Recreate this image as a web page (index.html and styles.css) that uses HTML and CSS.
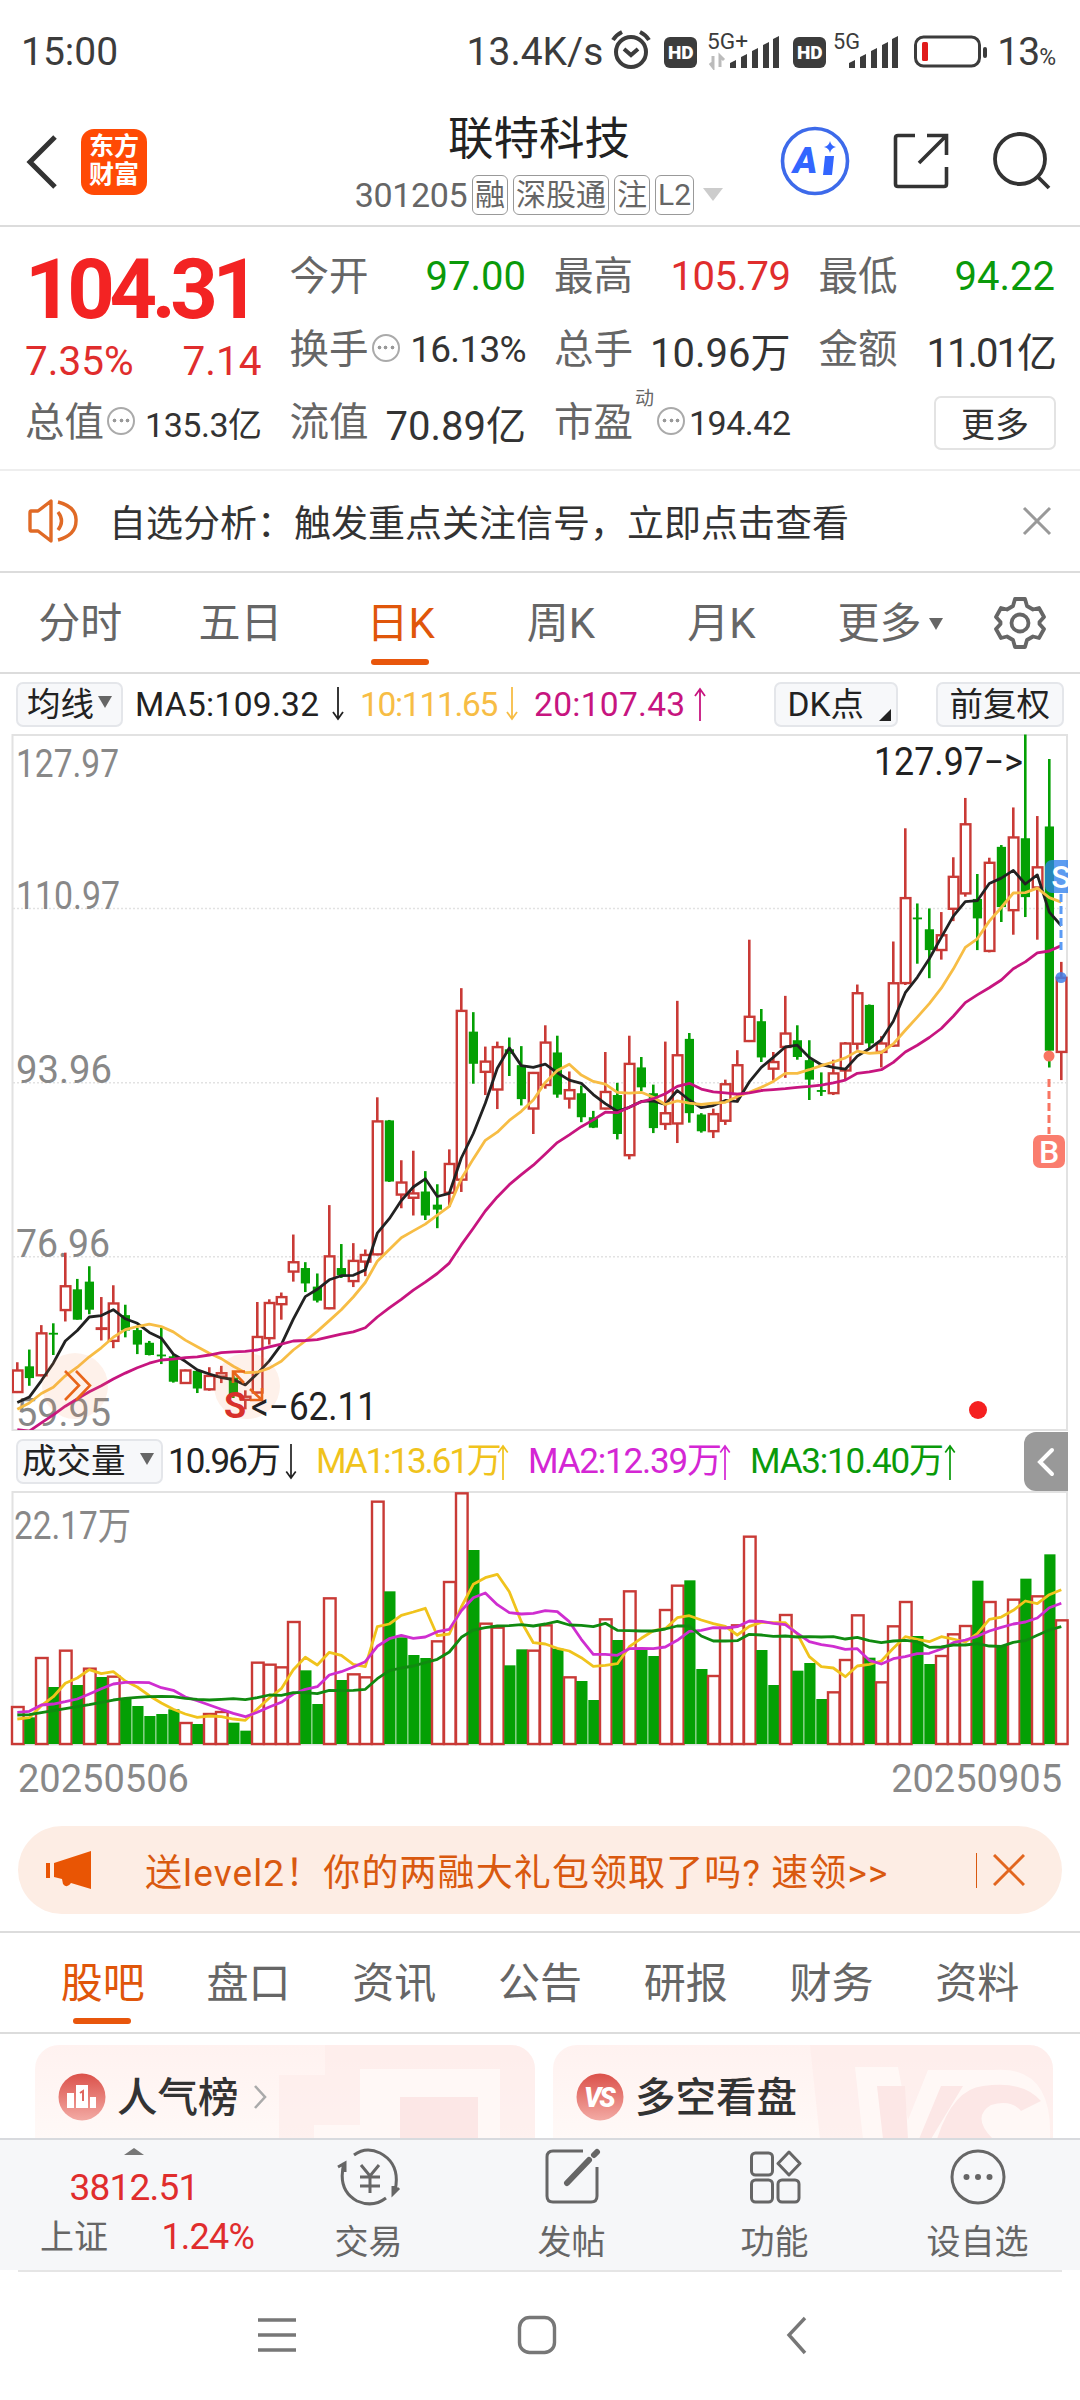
FILE: index.html
```html
<!DOCTYPE html>
<html lang="zh-CN">
    <head>
        <meta charset="UTF-8">
        <meta name="viewport" content="width=device-width, initial-scale=1.0">
        <title>联特科技 301205</title>
        <link rel="stylesheet" href="styles.css">
    </head>
    <body>
        <div class="status-bar">
            <span class="time">15:00</span>
            <span class="speed">13.4K/s</span>
            <svg class="alarm" width="42" height="42" viewBox="0 0 42 42" fill="none" stroke="#3c3c3c" stroke-width="4">
                <circle cx="21" cy="23" r="15"/>
                <path d="M3 11 Q6 6 12 3 M39 11 Q36 6 30 3 M14 20 L21 26 L28 20"/>
            </svg>
            <span class="hd">HD</span>
            <svg class="signal" width="74" height="40" viewBox="0 0 74 40">
                <text x="0" y="19" font-size="22" textLength="41" lengthAdjust="spacingAndGlyphs">5G+</text>
                <path d="M6 26 V37 L3 33 M13 37 V26 L17 30" fill="none" stroke="#bbb" stroke-width="3"/>
                <path d="M23 38 V33 L29 30 V38 Z M34 38 V27 L40 24 V38 Z M45 38 V21 L51 18 V38 Z M56 38 V15 L62 12 V38 Z M66 38 V9 L72 6 V38 Z"/>
            </svg>
            <span class="hd hd2">HD</span>
            <svg class="signal signal2" width="67" height="40" viewBox="0 0 67 40">
                <text x="0" y="19" font-size="22" textLength="27" lengthAdjust="spacingAndGlyphs">5G</text>
                <path d="M16 38 V33 L22 30 V38 Z M27 38 V27 L33 24 V38 Z M38 38 V21 L44 18 V38 Z M49 38 V15 L55 12 V38 Z M59 38 V9 L65 6 V38 Z"/>
            </svg>
            <svg class="battery" width="74" height="34" viewBox="0 0 74 34">
                <rect x="1.5" y="2" width="64" height="29" rx="8" fill="none" stroke="#3c3c3c" stroke-width="3"/>
                <rect x="8" y="7" width="6" height="19" rx="1.5" fill="#e01b1b"/>
                <rect x="69" y="12" width="4" height="11" rx="2" fill="#3c3c3c"/>
            </svg>
            <span class="percent">13<small>%</small></span>
        </div>

        <header class="header">
            <div class="header-left">
                <svg width="32" height="54" viewBox="0 0 32 54" fill="none" stroke="#333" stroke-width="5"><path d="M29 2 L4 27 L29 52"/></svg>
                <div class="logo">东方<br>财富</div>
            </div>
            <div class="header-title">
                <h1>联特科技</h1>
                <div class="code">
                    <span class="code-num">301205</span>
                    <span class="tag">融</span>
                    <span class="tag">深股通</span>
                    <span class="tag">注</span>
                    <span class="tag">L2</span>
                    <i class="down-light"></i>
                </div>
            </div>
            <div class="header-right">
                <svg width="70" height="70" viewBox="0 0 70 70">
                    <circle cx="35" cy="35" r="32.5" fill="none" stroke="#3d6aea" stroke-width="3.6"/>
                    <text class="ai" x="13" y="47">A</text>
                    <path d="M45 30 L54 30 L52 49 L43 49 Z M50 15 Q51 20 56 21 Q51 22 50 27 Q49 22 44 21 Q49 20 50 15" fill="#3366ff"/>
                </svg>
                <svg width="58" height="58" viewBox="0 0 58 58" fill="none" stroke="#333" stroke-width="3.6">
                    <path d="M23 3.500 H6 Q3.500 3.500 3.500 6 V52 Q3.500 54.500 6 54.500 H52 Q54.500 54.500 54.500 52 V35 M35 3.500 H54.500 V23 M54 4 L27 31"/>
                </svg>
                <svg width="60" height="58" viewBox="0 0 60 58" fill="none" stroke="#333" stroke-width="3.8"><circle cx="28" cy="27" r="25"/><path d="M46 45 L57 56"/></svg>
            </div>
        </header>

        <section class="quote">
            <div class="quote-col">
                <div class="price red">104.31</div>
                <div class="change red"><span>7.35%</span><span>7.14</span></div>
                <div class="cell"><label>总值</label><i class="dots"></i><b class="small">135.3亿</b></div>
            </div>
            <div class="quote-col">
                <div class="cell"><label>今开</label><b class="green">97.00</b></div>
                <div class="cell"><label>换手</label><i class="dots"></i><b class="mid">16.13%</b></div>
                <div class="cell"><label>流值</label><b>70.89亿</b></div>
            </div>
            <div class="quote-col">
                <div class="cell"><label>最高</label><b class="red tight">105.79</b></div>
                <div class="cell"><label>总手</label><b>10.96万</b></div>
                <div class="cell"><label>市盈</label><sup>动</sup><i class="dots"></i><b class="small">194.42</b></div>
            </div>
            <div class="quote-col">
                <div class="cell"><label>最低</label><b class="green">94.22</b></div>
                <div class="cell"><label>金额</label><b class="tighter">11.01亿</b></div>
                <div class="cell"><button class="more">更多</button></div>
            </div>
        </section>

        <section class="notice">
            <svg width="52" height="44" viewBox="0 0 52 44" fill="none" stroke="#e06a26" stroke-width="3.4" stroke-linejoin="round">
                <path d="M3 12 H10 L23 2 V42 L10 32 H3 Q2 32 2 30 V14 Q2 12 3 12 M30 13 Q37 22 30 31 M30 3 Q49 8 48 22 Q48 36 30 41"/>
            </svg>
            <p>自选分析：触发重点关注信号，立即点击查看</p>
            <svg class="close" width="30" height="30" viewBox="0 0 30 30" stroke="#999" stroke-width="3"><path d="M2 2 L28 28 M28 2 L2 28"/></svg>
        </section>

        <nav class="period-tabs">
            <span>分时</span>
            <span>五日</span>
            <span class="active">日K</span>
            <span>周K</span>
            <span>月K</span>
            <span class="period-more">更多<i class="down"></i></span>
            <svg width="52" height="54" viewBox="0 0 52 54" fill="none" stroke="#666" stroke-width="3.8" stroke-linejoin="round">
                <path d="M21 3 H31 L33 10 L39 13.500 L45 12 L50 21 L45.500 26 V28 L50 33 L45 42 L39 40.500 L33 44 L31 51 H21 L19 44 L13 40.500 L7 42 L2 33 L6.500 28 V26 L2 21 L7 12 L13 13.500 L19 10 Z"/>
                <circle cx="26" cy="27" r="8.500"/>
            </svg>
        </nav>

        <section class="indicator ma-row">
            <span class="chip">均线<i class="down"></i></span>
            <span class="ma ma5">MA5:109.32</span><svg class="arrow ma5" viewBox="0 0 12 34"><path d="M6 0 V32 M1 25 L6 32 L11 25"/></svg>
            <span class="ma ma10">10:111.65</span><svg class="arrow ma10" viewBox="0 0 12 34"><path d="M6 0 V32 M1 25 L6 32 L11 25"/></svg>
            <span class="ma ma20">20:107.43</span><svg class="arrow ma20" viewBox="0 0 12 34"><path d="M6 34 V2 M1 9 L6 2 L11 9"/></svg>
            <span class="chip chip-dk">DK点<i class="corner"></i></span>
            <span class="chip chip-fq">前复权</span>
        </section>

        <svg id="kline" class="chart" width="1080" height="702" viewBox="0 730 1080 702"></svg>

        <section class="indicator vol-row">
            <span class="chip">成交量<i class="down"></i></span>
            <span class="ma v0">10.96万</span><svg class="arrow v0" viewBox="0 0 12 38"><path d="M6 0 V36 M1 29 L6 36 L11 29"/></svg>
            <span class="ma v1">MA1:13.61万</span><svg class="arrow v1" viewBox="0 0 12 38"><path d="M6 38 V2 M1 9 L6 2 L11 9"/></svg>
            <span class="ma v2">MA2:12.39万</span><svg class="arrow v2" viewBox="0 0 12 38"><path d="M6 38 V2 M1 9 L6 2 L11 9"/></svg>
            <span class="ma v3">MA3:10.40万</span><svg class="arrow v3" viewBox="0 0 12 38"><path d="M6 38 V2 M1 9 L6 2 L11 9"/></svg>
            <span class="collapse"><svg width="18" height="30" viewBox="0 0 18 30" fill="none" stroke="#fff" stroke-width="4" stroke-linecap="round"><path d="M15 3 L3 15 L15 27"/></svg></span>
        </section>

        <svg id="volume" class="chart" width="1080" height="257" viewBox="0 1491 1080 257"></svg>

        <div class="dates"><span>20250506</span><span>20250905</span></div>

        <div class="banner">
            <svg width="46" height="40" viewBox="0 0 46 40" fill="#e95504"><path d="M0 13 H4 V28 H0 Z M8 13 L45 1 V39 L25 33 Q21 39 17 34 L16 29 L8 27 Z"/></svg>
            <p>送level2！你的两融大礼包领取了吗? 速领&gt;&gt;</p>
            <i class="bar"></i>
            <svg width="32" height="32" viewBox="0 0 32 32" stroke="#e2661f" stroke-width="3"><path d="M1 1 L31 31 M31 1 L1 31"/></svg>
        </div>

        <nav class="info-tabs">
            <span class="active">股吧</span>
            <span>盘口</span>
            <span>资讯</span>
            <span>公告</span>
            <span>研报</span>
            <span>财务</span>
            <span>资料</span>
        </nav>

        <section class="cards">
            <div class="card">
                <svg class="card-bg" width="500" height="94" viewBox="0 0 500 94">
                    <path d="M290 0 H500 V94 H244 V30 H290 Z" fill="#fdebe9" opacity=".6"/>
                    <path d="M279 80 H325 V24 H465 V94 H279 Z" fill="#fff8f6"/>
                    <path d="M365 52 H443 V94 H365 Z" fill="#fce7e6"/>
                </svg>
                <svg width="48" height="48" viewBox="0 0 48 48">
                    <circle cx="24" cy="24" r="23.500" fill="url(#ball)"/>
                    <path d="M9 20 H16 V35 H9 Z M18 12 H30 V35 H18 Z M32 24 H38 V35 H32 Z" fill="#fff"/>
                    <path d="M22 20 L25 18 V28" stroke="#e0675f" stroke-width="2" fill="none"/>
                    <defs><linearGradient id="ball" x1="0" y1="0" x2="0" y2="1"><stop offset="0" stop-color="#db514a"/><stop offset="1" stop-color="#f3aaa4"/></linearGradient></defs>
                </svg>
                <h2>人气榜</h2>
                <svg width="14" height="24" viewBox="0 0 14 24" fill="none" stroke="#aaa" stroke-width="2.6"><path d="M2 1 L12 12 L2 23"/></svg>
            </div>
            <div class="card">
                <svg class="card-bg" width="500" height="94" viewBox="0 0 500 94">
                    <path d="M257 0 H500 V94 H267 Z" fill="#fdebe9" opacity=".6"/>
                    <path d="M302 22 H345 L355 75 L375 25 H440 Q500 20 497 94 H310 Z" fill="#fff8f6"/>
                    <path d="M324 41 H352 L355 94 H330 Z M388 41 H410 L378 94 H366 Z" fill="#fce7e6"/>
                    <path d="M488 56 Q470 35 430 41 Q400 44 384 94 H440 Q418 72 438 60 Q458 54 468 66 Z" fill="#fce7e6"/>
                </svg>
                <svg width="48" height="48" viewBox="0 0 48 48">
                    <circle cx="24" cy="24" r="23.500" fill="url(#ball)"/>
                    <text class="vs" x="8" y="34">VS</text>
                </svg>
                <h2>多空看盘</h2>
            </div>
        </section>

        <footer class="toolbar">
            <div class="index">
                <i class="up"></i>
                <div class="index-num">3812.51</div>
                <div class="index-row"><span>上证</span><b>1.24%</b></div>
            </div>
            <div class="tool">
                <svg width="64" height="58" viewBox="0 0 64 58" fill="none" stroke="#666" stroke-width="3">
                    <path d="M17 7 Q29 -2 43 5 Q64 16 58 43 M62 40 L56 46 V38 M49 50 Q36 60 20 53 Q0 42 7 15 M1 19 L8 15 V24"/>
                    <path d="M24 17 L33 28 L42 17 M33 28 V45 M23 29 H43 M23 38 H43"/>
                </svg>
                <span>交易</span>
            </div>
            <div class="tool">
                <svg width="58" height="58" viewBox="0 0 58 58" fill="none" stroke="#666" stroke-width="3">
                    <path d="M40 3 H10 Q4 3 4 9 V48 Q4 54 10 54 H48 Q54 54 54 48 V19"/>
                    <path d="M24 35 L46 12 M51 7 L54 4" stroke-width="6" stroke-linecap="round"/>
                </svg>
                <span>发帖</span>
            </div>
            <div class="tool">
                <svg width="54" height="58" viewBox="0 0 54 58" fill="none" stroke="#666" stroke-width="3">
                    <rect x="3.500" y="5" width="21" height="22" rx="4"/>
                    <rect x="3.500" y="32" width="21" height="22" rx="4"/>
                    <rect x="30" y="32" width="21" height="22" rx="4"/>
                    <path d="M41 4 L52 15.500 L41 27 L30 15.500 Z" stroke-linejoin="round"/>
                </svg>
                <span>功能</span>
            </div>
            <div class="tool">
                <svg width="58" height="58" viewBox="0 0 58 58">
                    <circle cx="29" cy="29" r="26" fill="none" stroke="#666" stroke-width="3"/>
                    <g fill="#666"><circle cx="17.500" cy="29" r="3"/><circle cx="29" cy="29" r="3"/><circle cx="40.500" cy="29" r="3"/></g>
                </svg>
                <span>设自选</span>
            </div>
        </footer>

        <div class="system-nav">
            <svg width="40" height="40" viewBox="0 0 40 40" stroke="#777" stroke-width="3.400"><path d="M1 5 H39 M1 20 H39 M1 35 H39"/></svg>
            <svg width="40" height="40" viewBox="0 0 40 40" fill="none" stroke="#777" stroke-width="3.400"><rect x="2.500" y="2.500" width="35" height="35" rx="10"/></svg>
            <svg width="40" height="40" viewBox="0 0 40 40" fill="none" stroke="#777" stroke-width="3.400"><path d="M28 3 L12 20 L28 38"/></svg>
        </div>

        <script src="script.js"></script>
    </body>
</html>
```
FILE: styles.css
```css
* {
    box-sizing: border-box;
}

body {
    margin: 0;
    width: 1080px;
    height: 2400px;
    overflow: hidden;
    background-color: #fff;
    color: #333;
    font-family: Roboto, "Noto Sans CJK SC", sans-serif;
}

svg {
    display: block;
    flex: none;
}

h1, h2, p {
    margin: 0;
    font-weight: 400;
}

i {
    display: inline-block;
    font-style: normal;
}

.red {
    color: #e02d2d;
}

.green {
    color: #0a9a0a;
}

/* Status bar */
.status-bar {
    display: flex;
    align-items: center;
    height: 104px;
    padding: 0 25px 0 21px;
    font-size: 39px;
    color: #3c3c3c;
    fill: #3c3c3c;
}

.time {
    margin-right: auto;
}

.speed {
    margin-right: 7px;
}

.alarm {
    margin: 0 12px 4px 0;
}

.hd {
    width: 33px;
    height: 31px;
    border-radius: 6px;
    background-color: #3c3c3c;
    color: #fff;
    font-size: 19px;
    font-weight: 900;
    line-height: 31px;
    text-align: center;
}

.signal {
    margin: 0 12px 4px 10px;
}

.signal2 {
    margin: 0 14px 4px 7px;
}

.battery {
    margin-right: 9px;
}

.percent {
    letter-spacing: -1px;
}

.percent small {
    font-size: 23px;
}

/* Header */
.header {
    display: grid;
    grid-template-columns: 1fr auto 1fr;
    align-items: center;
    height: 123px;
    padding: 0 28px 0 26px;
    border-bottom: 2px solid #dcdcdc;
}

.header-left {
    display: flex;
    align-items: center;
    gap: 23px;
    padding-bottom: 6px;
}

.logo {
    width: 66px;
    height: 66px;
    border-radius: 13px;
    background-color: #ff4a05;
    color: #fff;
    font-size: 25px;
    font-weight: 700;
    line-height: 28px;
    padding-top: 4px;
    text-align: center;
}

.header-title {
    text-align: center;
    color: #222;
}

.header-title h1 {
    font-size: 45.5px;
    line-height: 60px;
}

.code {
    display: flex;
    align-items: center;
    gap: 5px;
    height: 50px;
}

.code-num {
    font-size: 34px;
    letter-spacing: -0.4px;
    color: #666;
}

.tag {
    height: 40px;
    padding: 0 2px;
    border: 1.5px solid #999;
    border-radius: 6px;
    font-size: 30px;
    line-height: 37px;
    color: #666;
}

.down-light {
    margin-left: 4px;
    border: 10px solid transparent;
    border-top: 13px solid #ccc;
    border-bottom: 0;
}

.header-right {
    display: flex;
    align-items: center;
    justify-content: flex-end;
    gap: 42px;
    padding-bottom: 8px;
}

.ai {
    font-size: 37px;
    font-weight: 900;
    font-style: italic;
    fill: #3366ff;
}

/* Quote */
.quote {
    display: grid;
    grid-template-columns: repeat(4, 1fr);
    column-gap: 28px;
    height: 244px;
    padding: 13px 25px 0 25px;
    border-bottom: 2px solid #eee;
}

.cell {
    display: flex;
    align-items: center;
    height: 73px;
}

.cell label {
    font-size: 39.5px;
    line-height: 60px;
    color: #666;
}

.cell b {
    margin-left: auto;
    font-size: 40px;
    font-weight: 400;
}

.cell b.mid {
    font-size: 37px;
    letter-spacing: -0.7px;
}

.cell b.small {
    font-size: 34px;
    letter-spacing: -0.5px;
}

.cell b.tight {
    letter-spacing: -0.5px;
}

.cell b.tighter {
    letter-spacing: -2px;
}

.cell sup {
    width: 21px;
    align-self: flex-start;
    font-size: 19px;
    line-height: 26px;
    padding-left: 2px;
    color: #666;
}

.dots {
    width: 28px;
    height: 28px;
    margin: -4px 0 0 3px;
    border: 2px solid #aaa;
    border-radius: 50%;
    background: radial-gradient(circle, #999 1.6px, transparent 2.2px) center / 7px 7px no-repeat,
        radial-gradient(circle, #999 1.6px, transparent 2.2px) 2px center / 7px 7px no-repeat,
        radial-gradient(circle, #999 1.6px, transparent 2.2px) 15px center / 7px 7px no-repeat;
}

.price {
    height: 92px;
    font-size: 83px;
    font-weight: 700;
    line-height: 100px;
    letter-spacing: -5.4px;
    color: #f32323;
}

.change {
    display: flex;
    justify-content: space-between;
    height: 54px;
    font-size: 40.5px;
    line-height: 59px;
}

.more {
    width: 122px;
    height: 54px;
    margin: 0 -1px 0 auto;
    border: 2px solid #e3e3e3;
    border-radius: 7px;
    background-color: #fff;
    color: #333;
    font: 34px/46px "Noto Sans CJK SC", sans-serif;
    padding: 0;
}

/* Notice */
.notice {
    display: flex;
    align-items: center;
    height: 102px;
    padding: 0 28px 0 28px;
    border-bottom: 2px solid #dcdcdc;
    font-size: 37px;
}

.notice p {
    margin: 0 auto 0 29px;
}

/* Period tabs */
.period-tabs {
    display: flex;
    align-items: center;
    height: 101px;
    padding-right: 34px;
    border-bottom: 2px solid #dcdcdc;
    font-size: 42px;
    color: #666;
}

.period-tabs span {
    position: relative;
    width: 160.3px;
    height: 99px;
    text-align: center;
    line-height: 102px;
}

.period-tabs .active, .info-tabs .active {
    color: #e0560a;
}

.active::after {
    content: "";
    position: absolute;
    left: 50%;
    bottom: 7px;
    width: 58px;
    height: 6px;
    margin-left: -30px;
    border-radius: 3px;
    background-color: #e8560c;
}

.period-tabs .period-more {
    width: auto;
    margin: 0 auto 0 36px;
}

.down {
    margin-left: 7px;
    border: 7px solid transparent;
    border-top: 12px solid #666;
    border-bottom: 0;
    vertical-align: 8px;
}

/* Indicator rows */
.indicator {
    display: flex;
    align-items: center;
    height: 56px;
    padding: 4px 16px 0;
    font-size: 33.5px;
    white-space: nowrap;
}

.indicator > * {
    flex: none;
}

.chip {
    height: 45px;
    border: 2px solid #e4e6ea;
    border-radius: 7px;
    background-color: #f7f8fa;
    padding: 0 9px;
    line-height: 41px;
    font-size: 33.5px;
    color: #222;
}

.ma-row .chip:first-child {
    width: 107px;
    margin-right: 12px;
}

.ma-row .down {
    margin-left: 4px;
}

.arrow {
    width: 12px;
    height: 36px;
    fill: none;
    stroke: currentColor;
    stroke-width: 1.8;
}

.ma5, .v0 { color: #222; }
.ma10 { color: #f7bd45; }
.ma20 { color: #c7157f; }
.v1 { color: #f0c31c; }
.v2 { color: #d426d4; }
.v3 { color: #0a9a0a; }

span.ma5 { width: 197px; letter-spacing: 0.3px; }
span.ma10 { width: 146px; margin-left: 16px; letter-spacing: -1.3px; }
span.ma20 { width: 160px; margin-left: 16px; letter-spacing: 0.3px; }

.chip-dk {
    position: relative;
    margin-left: auto;
    width: 124px;
    padding-left: 12px;
}

.corner {
    position: absolute;
    right: 5px;
    bottom: 4px;
    border-left: 12px solid transparent;
    border-bottom: 12px solid #222;
}

.chip-fq {
    margin-left: 38px;
    padding: 0 12px;
}

.vol-row {
    height: 59px;
    padding-right: 12px;
    padding-top: 0;
}

.vol-row .chip {
    width: 147px;
    padding: 0 4px;
    font-size: 34.5px;
    margin-right: 5px;
}

.vol-row .down {
    margin-left: 14px;
}

.vol-row .ma { font-size: 35px; line-height: 50px; }
span.v0 { width: 117px; letter-spacing: -2px; }
span.v1 { width: 181px; margin-left: 19px; letter-spacing: -2.1px; }
span.v2 { width: 191px; margin-left: 19px; letter-spacing: -1.2px; }
span.v3 { width: 194px; margin-left: 19px; letter-spacing: -1.2px; }

.collapse {
    display: flex;
    align-items: center;
    justify-content: center;
    width: 44px;
    height: 59px;
    margin-left: auto;
    border-radius: 12px 0 0 12px;
    background-color: #999;
}

.dates {
    display: flex;
    justify-content: space-between;
    height: 78px;
    padding: 0 18px;
    font-size: 38px;
    line-height: 63px;
    color: #888;
}

/* Banner */
.banner {
    display: flex;
    align-items: center;
    height: 88px;
    margin: 0 18px 17px;
    padding: 0 37px 0 28px;
    border-radius: 44px;
    background-color: #fdede4;
    color: #d9590f;
    font-size: 37px;
    letter-spacing: 1.1px;
}

.banner p {
    margin: 0 auto 0 53px;
}

.bar {
    width: 1px;
    height: 35px;
    margin-right: 16px;
    background-color: #d9590f;
}

/* Info tabs */
.info-tabs {
    display: flex;
    height: 103px;
    padding: 0 30px;
    border-top: 2px solid #dcdcdc;
    border-bottom: 2px solid #dcdcdc;
    font-size: 42px;
    line-height: 102px;
    color: #666;
}

.info-tabs span {
    position: relative;
    flex: 1;
    text-align: center;
}

.info-tabs .active::after {
    bottom: 8px;
}

/* Cards */
.cards {
    display: flex;
    gap: 18px;
    height: 104px;
    padding: 11px 27px 0 35px;
}

.card {
    position: relative;
    display: flex;
    align-items: center;
    width: 500px;
    padding: 11px 0 0 23px;
    border-radius: 24px 24px 0 0;
    background: linear-gradient(#fff2f0, #fff9f7);
    overflow: hidden;
}

.card > * {
    position: relative;
}

.card .card-bg {
    position: absolute;
    left: 0;
    top: 0;
}

.card h2 {
    margin: 0 14px 0 11px;
    padding-top: 2px;
    font-size: 40.5px;
    font-weight: 500;
    line-height: 60px;
}

.vs {
    font-size: 27px;
    font-weight: 900;
    font-style: italic;
    letter-spacing: -2px;
    fill: #fff;
}

/* Toolbar */
.toolbar {
    display: flex;
    height: 132px;
    border-top: 2px solid #d8dade;
    background-color: #f6f7f9;
    font-size: 34px;
    color: #666;
}

.index {
    width: 267px;
    padding: 8px 13px 0 40px;
    text-align: center;
}

.up {
    display: block;
    width: 0;
    margin-left: 84px;
    border: 10px solid transparent;
    border-bottom: 7px solid #777;
    border-top: 0;
}

.index-num {
    padding-right: 26px;
    font-size: 37px;
    line-height: 66px;
    letter-spacing: -0.8px;
    color: #e02d2d;
}

.index-row {
    display: flex;
    justify-content: space-between;
    line-height: 32px;
}

.index-row b {
    font-size: 36px;
    font-weight: 400;
    letter-spacing: -0.8px;
    color: #e02d2d;
}

.tool {
    display: flex;
    flex-direction: column;
    align-items: center;
    width: 203px;
    padding-top: 8px;
}

.tool span {
    line-height: 50px;
    padding-top: 11px;
}

/* System navigation */
.system-nav {
    display: flex;
    justify-content: space-between;
    height: 130px;
    margin: 0 18px;
    padding: 43px 245px 0 239px;
    border-top: 2px solid #e5e5e5;
}

/* Charts */
.frame {
    fill: none;
    stroke: #e2e2e2;
    stroke-width: 2;
}

.grid {
    stroke: #e2e2e2;
    stroke-width: 1.5;
    stroke-dasharray: 2 2;
}

.axis {
    font-size: 38px;
    fill: #888;
}

.mark {
    font-size: 38px;
    fill: #222;
}

.up-body {
    fill: #fff;
    stroke: #c93a36;
    stroke-width: 2.4;
}

.up-wick {
    stroke: #c93a36;
    stroke-width: 2.6;
}

.down-body {
    fill: #04a004;
}

.down-wick {
    stroke: #04a004;
    stroke-width: 2.6;
}

.line {
    fill: none;
    stroke-width: 2.8;
    stroke-linejoin: round;
}

.badge {
    font-size: 32px;
    font-weight: 500;
    fill: #fff;
    text-anchor: middle;
}
```
FILE: script.js
```js
const step = 12;
const firstX = 17.3;

// [direction, high, body top, body bottom, low], measured down from the top of the plot
const candles = [
    ['r',1396,1412,1464,1464],['g',1368,1405,1431,1448],['r',1314,1330,1427,1427],['g',1310,1331,1335,1380],
    ['r',1154,1226,1283,1306],['g',1212,1235,1302,1302],['g',1184,1218,1280,1290],['r',1252,1319,1324,1348],
    ['r',1226,1264,1351,1365],['g',1269,1292,1326,1341],['g',1320,1325,1357,1378],['g',1349,1353,1380,1381],
    ['g',1320,1379,1383,1400],['g',1378,1383,1439,1441],['r',1412,1412,1444,1444],['g',1413,1415,1454,1464],
    ['r',1407,1424,1458,1459],['r',1404,1418,1430,1442],['g',1425,1430,1467,1475],['r',1458,1470,1481,1500],
    ['r',1263,1338,1465,1465],['r',1257,1263,1345,1357],['r',1242,1250,1270,1302],['r',1114,1173,1198,1218],
    ['g',1175,1188,1222,1241],['g',1200,1229,1260,1264],['r',1049,1160,1279,1279],['g',1135,1188,1204,1210],
    ['r',1133,1170,1219,1230],['r',1147,1157,1176,1206],['r',811,862,1160,1160],['g',861,862,997,998],
    ['r',950,997,1028,1056],['r',929,1021,1035,1072],['g',974,1019,1072,1082],['g',1003,1048,1059,1100],
    ['r',926,956,1024,1053],['r',570,618,995,1020],['g',623,666,737,781],['r',699,730,757,806],
    ['r',688,698,796,837],['g',679,705,715,764],['g',698,740,815,829],['r',755,755,838,892],
    ['r',652,688,786,792],['g',675,712,805,812],['r',754,793,816,836],['g',785,802,855,866],
    ['g',841,855,878,879],['r',711,797,838,838],['g',779,806,892,904],['r',675,735,941,948],
    ['g',722,745,789,797],['g',783,802,879,890],['r',688,844,872,883],['r',598,716,871,912],
    ['g',669,682,846,867],['g',846,849,886,889],['r',836,846,888,901],['r',772,780,865,872],
    ['r',707,738,806,822],['r',463,631,689,689],['g',616,643,723,733],['r',711,731,750,774],
    ['r',587,668,702,768],['g',652,685,722,728],['g',685,729,772,817],['g',756,795,799,808],
    ['r',728,756,804,806],['r',689,690,754,772],['r',562,579,695,706],['g',606,607,692,704],
    ['r',676,690,713,745],['r',467,557,699,700],['r',217,369,561,563],['g',383,414,418,516],
    ['g',394,440,486,548],['r',402,451,488,507],['r',281,322,397,422],['r',150,206,363,368],
    ['g',318,373,416,486],['r',282,291,490,491],['g',254,258,391,424],['r',171,235,400,452],
    ['g',10,239,369,413],['r',190,301,350,463],['g',64,213,708,745],['r',512,545,713,773]
];

const ma5 = [1485,1473,1437,1398,1349,1326,1296,1293,1280,1300,1310,1330,1343,1378,1394,1413,1422,1430,1434,1446,1421,1393,1357,1301,1251,1235,1214,1205,1204,1192,1111,1079,1039,1009,991,1030,1023,945,891,824,747,702,741,745,738,757,773,780,805,825,842,833,820,819,827,796,817,834,829,818,820,777,745,723,700,696,723,739,745,749,720,704,684,643,580,546,505,458,411,379,377,339,327,310,340,320,402,432];
const ma10 = [1500,1486,1465,1451,1426,1407,1384,1364,1341,1324,1317,1312,1317,1329,1347,1362,1376,1388,1405,1419,1418,1409,1394,1369,1349,1328,1304,1280,1252,1220,1173,1147,1121,1106,1091,1071,1052,991,947,906,888,862,842,817,778,752,738,762,776,782,800,802,800,811,827,819,824,827,824,822,809,800,789,776,758,758,750,741,733,724,709,714,712,693,663,634,604,570,528,480,461,422,392,360,359,349,370,380];
const ma20 = [1545,1548,1530,1512,1493,1477,1461,1448,1433,1420,1408,1398,1391,1389,1386,1384,1380,1375,1373,1372,1369,1362,1356,1349,1348,1346,1340,1334,1329,1320,1296,1276,1257,1237,1219,1200,1177,1137,1100,1062,1031,1004,982,961,936,911,894,876,861,844,845,833,821,814,803,787,780,793,799,801,804,801,796,794,792,789,787,784,779,773,758,755,750,734,711,696,679,659,632,602,585,569,552,527,512,492,488,476];

const volumes = 'r828 g862 r681 g771 r659 g765 r713 g741 r737 g804 g828 g858 g852 g838 r876 g882 r849 r843 g878 g902 r695 r701 r709 r573 g721 g822 r502 g750 r730 r739 r212 g484 g622 g675 g684 r631 r453 r187 g360 r578 r590 g706 g658 r659 r583 g656 r739 g753 g810 r565 g630 r481 g654 g678 r537 r464 g451 g717 r735 r590 r583 r317 g660 g765 r552 g722 g699 g807 r784 r687 r553 g683 r754 r586 r513 g618 g702 r675 r610 r585 g452 r513 g645 r506 g446 r496 g373 r568'.split(' ');
const vol1 = [867,863,827,800,760,744,719,731,725,753,771,797,819,838,852,862,858,860,867,871,837,804,776,719,682,705,667,676,703,710,590,582,556,546,535,617,612,531,463,443,433,485,575,638,642,655,663,683,709,706,701,650,625,602,596,563,557,570,581,589,615,589,577,578,578,612,680,710,714,740,708,703,693,655,620,628,635,620,627,636,611,568,561,541,513,521,494,479];
const vol2 = [847,844,825,822,815,807,792,776,762,757,757,758,773,781,801,812,825,838,850,860,847,831,817,792,778,770,735,725,711,695,649,626,616,625,621,605,598,542,503,489,524,548,552,550,542,545,575,628,673,673,676,656,655,656,651,631,604,601,593,594,590,573,574,580,584,610,635,644,649,658,656,691,702,686,680,671,670,657,638,630,619,603,592,582,576,564,533,520];
const vol3 = [855,854,848,842,836,830,824,817,810,805,802,800,799,800,805,808,810,808,806,809,803,795,796,788,788,791,781,782,781,778,746,722,714,708,698,688,666,622,600,593,588,587,584,588,582,574,585,586,590,580,601,602,603,603,597,588,588,618,633,633,632,613,615,619,618,621,620,621,620,627,622,632,638,633,631,635,652,651,645,645,641,648,649,637,632,616,600,590];

const x = i => firstX + i * step;
const priceY = v => 730 + v / 2.208;
const volY = v => 1430 + v / 3;

function line(values, y, color) {
    const points = values.map((v, i) => x(i).toFixed(1) + ',' + y(v).toFixed(1)).join(' ');
    return `<polyline class="line" stroke="${color}" points="${points}"/>`;
}

function drawKline() {
    let svg = '<clipPath id="plot"><rect x="12" y="730" width="1056" height="700"/></clipPath>';
    svg += '<rect class="frame" x="12.500" y="735" width="1054.500" height="695"/>';
    [908.5, 1082.7, 1256.8].forEach(y => {
        svg += `<line class="grid" x1="13" x2="1067" y1="${y}" y2="${y}"/>`;
    });

    const labels = [['127.97', 777, 103], ['110.97', 909, 104], ['93.96', 1083, 96], ['76.96', 1257, 94], ['59.95', 1426, 95]];
    labels.forEach(([text, y, w]) => {
        svg += `<text class="axis" x="16" y="${y}" textLength="${w}" lengthAdjust="spacingAndGlyphs">${text}</text>`;
    });

    svg += '<g clip-path="url(#plot)">';
    candles.forEach(([dir, high, top, bottom, low], i) => {
        const cx = x(i);
        const name = dir === 'r' ? 'up' : 'down';
        const t = priceY(top), b = priceY(bottom);
        svg += `<line class="${name}-wick" x1="${cx}" x2="${cx}" y1="${priceY(high)}" y2="${priceY(low)}"/>`;
        if (dir === 'r') {
            const h = Math.max(b - t - 2, 0.5);
            svg += `<rect class="up-body" x="${cx - 4.5}" y="${t + 1}" width="9.6" height="${h}"/>`;
        } else {
            svg += `<rect class="down-body" x="${cx - 4.5}" y="${t}" width="9.2" height="${b - t}"/>`;
        }
    });

    // sell badge sits under the average lines
    svg += '<rect x="1045" y="860" width="34" height="33" rx="7" fill="#2f80ed" fill-opacity=".78"/>';
    svg += '<text class="badge" x="1061" y="888">S</text>';
    svg += line(ma5, priceY, '#222') + line(ma10, priceY, '#f7bd45') + line(ma20, priceY, '#c7157f');
    svg += '<line x1="1061" x2="1061" y1="894" y2="950" stroke="#5b9bf5" stroke-width="3" stroke-dasharray="8 4"/>';
    svg += '<circle cx="1061" cy="977.500" r="5.500" fill="#3f7fe8" fill-opacity=".85"/>';
    svg += '<circle cx="1049" cy="1056" r="5.500" fill="#f87562"/>';
    svg += '<line x1="1049" x2="1049" y1="1079" y2="1134" stroke="#f87562" stroke-width="3" stroke-dasharray="8 4"/>';
    svg += '<rect x="1033" y="1135" width="32" height="33" rx="7" fill="#fa7d6e"/><text class="badge" x="1049" y="1163">B</text></g>';

    svg += '<g fill="#f5894f" fill-opacity=".12"><circle cx="75" cy="1386" r="33"/><circle cx="247" cy="1386" r="33"/></g>';
    svg += '<g fill="none" stroke="#e8651a" stroke-width="2.6"><path d="M65 1371 L79 1385.500 L65 1400 M76 1371 L90 1385.500 L76 1400"/>';
    svg += '<path d="M245 1371.500 H233 V1383 M233 1371.500 L244 1383 M250 1400 H262 V1388 M262 1400 L250 1389"/></g>';
    svg += '<text x="224" y="1418" font-size="36" font-weight="700" fill="#d8302b">S</text>';
    svg += '<text class="mark" x="251" y="1420" textLength="126" lengthAdjust="spacingAndGlyphs">&lt;−62.11</text>';
    svg += '<text class="mark" x="874" y="775" textLength="149" lengthAdjust="spacingAndGlyphs">127.97−&gt;</text>';
    svg += '<circle cx="978" cy="1410" r="9" fill="#f52020"/>';
    document.getElementById('kline').innerHTML = svg;
}

function drawVolume() {
    let svg = '<rect class="frame" x="12.500" y="1492" width="1054.500" height="252.500"/>';
    volumes.forEach((item, i) => {
        const top = volY(+item.slice(1));
        if (item[0] === 'r') {
            svg += `<rect class="up-body" x="${x(i) - 5.3}" y="${top + 1}" width="11.6" height="${1743 - top}"/>`;
        } else {
            svg += `<rect class="down-body" x="${x(i) - 5}" y="${top}" width="11.2" height="${1744 - top}"/>`;
        }
    });
    svg += line(vol1, volY, '#f0c31c') + line(vol2, volY, '#cf2ed0') + line(vol3, volY, '#108a10');
    svg += '<text class="axis" x="14" y="1539" font-size="36" textLength="117" lengthAdjust="spacingAndGlyphs">22.17万</text>';
    document.getElementById('volume').innerHTML = svg;
}

drawKline();
drawVolume();
```
